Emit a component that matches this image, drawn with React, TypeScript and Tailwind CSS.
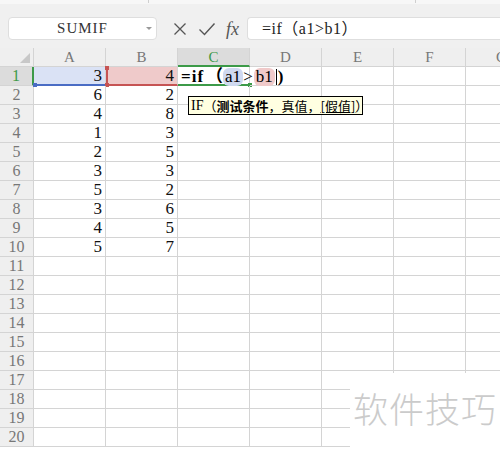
import React from 'react';

const data: [number, number][] = [
  [3, 4], [6, 2], [4, 8], [1, 3], [2, 5],
  [3, 3], [5, 2], [3, 6], [4, 5], [5, 7],
];

const cols = ['A', 'B', 'C', 'D', 'E', 'F', 'G'];

function HeaderRow() {
  return (
    <div className="flex h-[19px] bg-[#efefef]">
      <div className="relative w-[34px] shrink-0 border-r border-b border-[#d4d4d4]">
        <svg className="absolute right-[3px] bottom-[3px]" width="10" height="10" viewBox="0 0 10 10">
          <path d="M10 0 L10 10 L0 10 Z" fill="#c8c8c8" />
        </svg>
      </div>
      {cols.map((c) => (
        <div
          key={c}
          className={
            c === 'C'
              ? 'w-[72px] shrink-0 border-r border-r-[#d4d4d4] border-b-2 border-b-[#3c9a48] bg-[#dcdcdc] text-center text-[15px] leading-[18px] text-[#3c9a48]'
              : 'w-[72px] shrink-0 border-r border-b border-[#d4d4d4] text-center text-[15px] leading-[18px] text-[#777]'
          }
        >
          {c}
        </div>
      ))}
    </div>
  );
}

function Row({ n }: { n: number }) {
  const vals = data[n - 1];
  const first = n === 1;
  return (
    <div className="flex h-[19px]">
      <div
        className={
          first
            ? 'w-[34px] shrink-0 border-r-2 border-r-[#3c9a48] border-b border-b-[#d4d4d4] bg-[#dcdcdc] text-center text-[16px] leading-[18px] text-[#3c9a48]'
            : 'w-[34px] shrink-0 border-r border-b border-[#d4d4d4] bg-[#efefef] text-center text-[16px] leading-[18px] text-[#777]'
        }
      >
        {n}
      </div>
      {cols.map((c, i) => {
        let cls = 'border-r border-b border-[#d4d4d4]';
        if (first && c === 'A') cls = 'border-r border-r-[#d4d4d4] border-b-2 border-b-[#4a6cc4] bg-[#dae2f5]';
        if (first && c === 'B') cls = 'border-l-2 border-l-[#c65454] border-r border-r-[#d4d4d4] border-b-2 border-b-[#c65454] bg-[#efcaca]';
        if (first && c === 'C') cls = 'border-r border-r-[#d4d4d4] border-b-2 border-b-[#3c9a48]';
        const v = vals && i < 2 ? vals[i] : null;
        return (
          <div
            key={c}
            className={`relative w-[72px] shrink-0 ${cls} pr-[3px] text-right text-[17px] leading-[18px] text-[#111]`}
          >
            {v}
            {first && c === 'A' && (
              <div className="absolute -left-[1px] -bottom-[3px] h-[4px] w-[4px] bg-[#4a6cc4]" />
            )}
            {first && c === 'B' && (
              <>
                <div className="absolute -left-[3px] -top-[1px] h-[4px] w-[4px] bg-[#c65454]" />
                <div className="absolute -left-[3px] -bottom-[3px] h-[4px] w-[4px] bg-[#c65454]" />
              </>
            )}
            {first && c === 'C' && (
              <div className="absolute -right-[3px] -bottom-[3px] h-[4px] w-[4px] bg-[#3c9a48]" />
            )}
          </div>
        );
      })}
    </div>
  );
}

export default function App() {
  return (
    <div className="relative h-[450px] w-[500px] overflow-hidden bg-white [font-family:'Liberation_Serif','Noto_Sans_CJK_SC',serif]">
      {/* toolbar */}
      <div className="relative flex h-[48px] items-start bg-[#f0f0f0] pt-[17px]">
        <div className="absolute left-0 right-0 top-0 h-[4px] bg-[#f7f7f7]" />
        <div className="absolute left-[148px] top-0 h-[3px] w-[1px] bg-[#cfcfcf]" />
        <div className="absolute left-[415px] top-0 h-[3px] w-[1px] bg-[#cfcfcf]" />
        <div className="relative ml-[8px] flex h-[23px] w-[149px] items-center justify-center rounded-[4px] border border-[#dedede] bg-white text-[15px] tracking-[1px] text-[#333]">
          SUMIF
          <svg className="absolute right-[4px] top-[9px]" width="6" height="4" viewBox="0 0 6 4">
            <path d="M0 0 L6 0 L3 3 Z" fill="#999" />
          </svg>
        </div>
        <div className="ml-[15px] flex h-[23px] items-center gap-[10px] text-[#555]">
          <svg width="16" height="16" viewBox="0 0 16 16" fill="none" stroke="#555" strokeWidth="1.3">
            <path d="M2.5 2.5 L13.5 13.5 M13.5 2.5 L2.5 13.5" />
          </svg>
          <svg width="18" height="16" viewBox="0 0 18 16" fill="none" stroke="#555" strokeWidth="1.4">
            <path d="M1.5 8.5 L6.5 13.5 L16.5 2.5" />
          </svg>
          <span className="text-[18px] italic leading-none text-[#555]">fx</span>
        </div>
        <div className="ml-[8px] flex h-[23px] flex-1 items-center rounded-l-[4px] border border-r-0 border-[#dedede] bg-white pl-[14px] text-[16px] tracking-[0.5px] text-[#222]">
          =if（a1&gt;b1）
        </div>
      </div>

      {/* grid */}
      <div>
        <HeaderRow />
        {Array.from({ length: 20 }, (_, i) => (
          <Row key={i} n={i + 1} />
        ))}
      </div>

      {/* in-cell formula overflow */}
      <div className="absolute left-[181px] top-[68px] flex h-[18px] items-center text-[17px] leading-[18px] text-black">
        <span className="font-bold tracking-[1px]">=if</span>
        <span className="ml-[2px] font-bold">（</span>
        <span className="rounded-[6px] bg-[#cfd9f0] px-[2px]">a1</span>
        <span>&gt;</span>
        <span className="ml-[1px] rounded-[6px] bg-[#f0caca] px-[2px]">b1</span>
        <span className="mx-[1px] h-[16px] w-[1px] bg-black" />
        <span className="font-bold">)</span>
      </div>

      {/* tooltip */}
      <div className="absolute left-[188px] top-[96px] flex h-[19px] w-[175px] items-center overflow-hidden whitespace-nowrap border border-black bg-[#ffffe1] pl-[2px] text-[13px] leading-none text-black">
        <span className="text-[14px]">IF</span>
        <span className="[font-family:'Noto_Sans_CJK_SC',sans-serif]">
          （<b>测试条件</b>，真值，<span className="underline">[假值]</span>）
        </span>
      </div>

      {/* watermark */}
      <div className="absolute left-[350px] top-[373px] flex h-[77px] w-[150px] items-center justify-center bg-white pb-[6px]">
        <span className="[font-family:'Noto_Sans_CJK_SC',sans-serif] text-[35px] font-light tracking-[1px] text-[#cbcbcb]">软件技巧</span>
      </div>
    </div>
  );
}
